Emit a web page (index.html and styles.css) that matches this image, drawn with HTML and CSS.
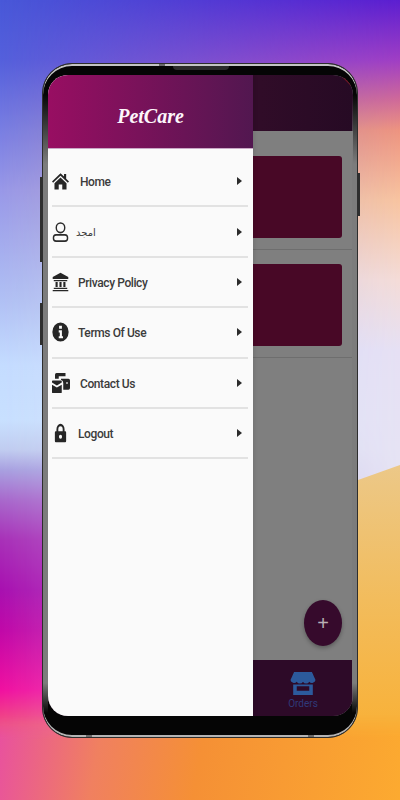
FILE: index.html
```html
<!DOCTYPE html>
<html lang="en">
<head>
<meta charset="utf-8">
<title>PetCare</title>
<link rel="stylesheet" href="styles.css">
</head>
<body>
<div class="wall wall-right"></div>
<div class="wall wall-orange"></div>
<div class="wall wall-bottom"></div>
<main class="phone">
  <span class="notch"></span>
  <span class="tick tick-top"></span>
  <span class="tick tick-bl"></span>
  <span class="tick tick-br"></span>
  <span class="btn btn-l1"></span>
  <span class="btn btn-l2"></span>
  <span class="btn btn-r"></span>
  <div class="screen">
    <div class="app">
      <header class="appbar"><span class="ribbon"></span></header>
      <section class="orders">
        <div class="order order-first"><div class="card"></div></div>
        <div class="order"><div class="card"></div></div>
      </section>
      <button class="fab">+</button>
      <nav class="bottom">
        <svg class="shop" viewBox="0 0 28 28"><path d="M4 1h20l4 9a4 4 0 0 1-7 2 4 4 0 0 1-7 0 4 4 0 0 1-7 0 4 4 0 0 1-7-2z"/><path d="M3 15h22v12H3zM7 17v5h14v-5z" fill-rule="evenodd"/></svg>
        <span>Orders</span>
      </nav>
    </div>
    <aside class="drawer">
      <div class="drawer-head"><span class="logo">PetCare</span></div>
      <ul class="menu">
        <li class="item"><svg class="ico" viewBox="0 -1 24 26" preserveAspectRatio="none"><path d="M12 2 0 12.500l1.600 1.800L12 5.200l10.400 9.100 1.600-1.800-4-3.500V3h-3v3.200z"/><path d="M12 7.400 3.500 14.800V23h6v-6.500h5V23h6v-8.200z"/></svg><span class="label l-far">Home</span><span class="caret"></span></li>
        <li class="item"><svg class="ico ico-line" viewBox="0 0 24 24" preserveAspectRatio="none"><ellipse cx="12" cy="7" rx="6" ry="5.800"/><rect x="2" y="15.500" width="20" height="7.500" rx="3.700"/></svg><span class="label l-ar">امجد</span><span class="caret"></span></li>
        <li class="item"><svg class="ico" viewBox="0 0 24 24" preserveAspectRatio="none"><path d="M12 1 1 6v2.500h22V6zM2.500 9.500h19V11h-19zM5 12h3v6H5zM10.500 12h3v6h-3zM16 12h3v6h-3zM2.500 19h19v1.500h-19zM1 21.500h22V23H1z"/></svg><span class="label">Privacy Policy</span><span class="caret"></span></li>
        <li class="item"><svg class="ico" viewBox="0 0 24 24" preserveAspectRatio="none"><path fill-rule="evenodd" d="M12 .5a11.500 11.500 0 1 0 0 23 11.500 11.500 0 0 0 0-23zM10 4.500h4V8h-4zM9.500 10H14v7h1.500v2.500h-6V17H11v-4.500H9.500z"/></svg><span class="label">Terms Of Use</span><span class="caret"></span></li>
        <li class="item"><svg class="ico ico-wide" viewBox="0 0 24 24" preserveAspectRatio="none"><path d="M6 0h12v4H9v3H4V2a2 2 0 0 1 2-2zM12 7h10a2 2 0 0 1 2 2v9a2 2 0 0 1-2 2h-7v-8a4 4 0 0 0-3-4zM19 11v2h2v-2z"/><path d="M1 9h11a1 1 0 0 1 1 1v1.500L6.500 15 0 11.500V10a1 1 0 0 1 1-1zM0 14l6.500 3.500L13 14v9a1 1 0 0 1-1 1H1a1 1 0 0 1-1-1z"/></svg><span class="label l-near">Contact Us</span><span class="caret"></span></li>
        <li class="item"><svg class="ico ico-lock" viewBox="0 0 24 24" preserveAspectRatio="none"><path fill-rule="evenodd" d="M12 1a6.500 6.500 0 0 0-6.500 6.500V10H4.500A1.500 1.500 0 0 0 3 11.500v10A1.500 1.500 0 0 0 4.500 23h15a1.500 1.500 0 0 0 1.500-1.500v-10a1.500 1.500 0 0 0-1.500-1.500h-1V7.500A6.500 6.500 0 0 0 12 1zM8.500 10V7.500a3.500 3.500 0 0 1 7 0V10zM12 14a2.500 2.500 0 1 1 0 5 2.500 2.500 0 0 1 0-5z"/></svg><span class="label">Logout</span><span class="caret"></span></li>
      </ul>
    </aside>
  </div>
</main>
</body>
</html>
```
FILE: styles.css
```css
* { box-sizing: border-box; }
html, body { margin: 0; height: 100%; }
body {
  width: 400px; height: 800px; overflow: hidden; position: relative;
  padding: 63px 42px 62px;
  background: linear-gradient(180deg,
    #4858d8 0, #5460dc 60px, #9898e8 190px, #b0c0f4 300px, #c4dcff 365px, #c8e0ff 420px,
    #c0ccf0 450px, #a8a0e0 470px, #a868cc 500px, #a830b8 540px, #a810b0 590px, #c008a8 630px,
    #f010a0 690px, #f05080 725px, #e850a0 760px, #e068b0 800px);
}
.wall { position: absolute; inset: 0; }
.wall-right {
  background: linear-gradient(180deg,
    #5c1ed0 0, #a03ec4 60px, #d06a98 100px, #ee9480 130px, #f8c4a0 200px,
    #f4dcd8 280px, #e6e0f4 350px, #e6e4f4 480px);
  -webkit-mask-image: linear-gradient(90deg, transparent 0, #000 100%);
  mask-image: linear-gradient(90deg, transparent 0, #000 100%);
}
.wall-orange {
  background: linear-gradient(180deg, #ecc888 465px, #f2bc5c 600px, #f9b035 740px);
  clip-path: polygon(100% 465px, 358px 480px, 200px 600px, 200px 100%, 100% 100%);
}
.wall-bottom {
  top: 715px;
  background: linear-gradient(100deg, #e850a0 0, #f08060 25%, #f59035 50%, #fcaa30 100%);
  -webkit-mask-image: linear-gradient(180deg, transparent 0, #000 25px);
  mask-image: linear-gradient(180deg, transparent 0, #000 25px);
}
.phone {
  position: relative; width: 316px; height: 675px;
  background: #050505;
  border-radius: 30px;
  border: 1px solid #2e2e2e;
  box-shadow: inset 0 2px 0 #c4c4c4, inset 0 -2px 0 #b4b4b4;
  padding: 11px 4px 21px 5px;
}
.phone::before, .phone::after {
  content: ""; position: absolute; top: 30px; bottom: 24px; width: 5px;
  background: linear-gradient(180deg, transparent 0, #7c7c7c 70px, #7c7c7c calc(100% - 30px), transparent 100%);
}
.phone::before { left: 0; }
.phone::after { right: 0; }
.notch { position: absolute; left: 130px; top: 2px; width: 56px; height: 4px; background: #2c2c2c; border-radius: 0 0 4px 4px; }
.tick { position: absolute; width: 6px; height: 2px; background: #6a6a6a; }
.tick-top { left: 116px; top: 0; }
.tick-bl { left: 43px; bottom: 0; }
.tick-br { right: 43px; bottom: 0; }
.btn { position: absolute; width: 2px; background: #2e2e2e; }
.btn-l1 { left: -3px; top: 113px; height: 85px; }
.btn-l2 { left: -3px; top: 239px; height: 42px; }
.btn-r { right: -3px; top: 109px; height: 43px; }
.screen { position: relative; height: 100%; border-radius: 20px; overflow: hidden; background: #7f7f7f; }
.app { height: 100%; display: flex; flex-direction: column; padding-left: 205px; position: relative; }
.appbar { height: 56px; margin-left: -205px; background: linear-gradient(90deg, #300c28 70%, #260a24); flex: none; position: relative; }
.ribbon { position: absolute; right: -18px; top: -4px; width: 36px; height: 14px; background: linear-gradient(180deg, #d8a0a0 0, #a01c28 50%, #7a1422); transform: rotate(45deg); }
.orders { flex: 1; }
.order { height: 108px; padding: 14px 11px 0 0; border-bottom: 1px solid #6e6e6e; }
.order-first { height: 119px; padding-top: 25px; }
.card { height: 82px; background: #480826; border-radius: 0 3px 3px 0; }
.fab {
  position: absolute; right: 11px; bottom: 70px;
  width: 38px; height: 46px; border: 0; border-radius: 50%;
  background: #360a2c; color: #b8b0b4; font: 400 20px/46px "Liberation Sans", sans-serif; padding: 0;
  box-shadow: 0 2px 4px rgba(0,0,0,.3);
}
.bottom { height: 56px; flex: none; background: #2d0a28; margin-left: -205px; padding-left: 205px; display: flex; flex-direction: column; align-items: center; padding-top: 11px; color: #2f3a78; font: 400 10px/12px Roboto, sans-serif; }
.shop { width: 26px; height: 25px; fill: #2c5a9c; margin-bottom: 2px; }
.drawer { position: absolute; left: 0; top: 0; bottom: 0; width: 205px; background: #fafafa; display: flex; flex-direction: column; box-shadow: 2px 0 3px rgba(0,0,0,.08); }
.drawer-head { height: 74px; flex: none; display: flex; align-items: center; justify-content: center; padding-top: 8px; background: linear-gradient(90deg, #980e62, #521750); border-bottom: 1px solid #c9a8c6; }
.logo { color: #fdf6fb; font: italic 700 20px/24px "Liberation Serif", serif; }
.menu { list-style: none; margin: 0; padding: 8px 0 0 4px; }
.item {
  display: flex; align-items: center; height: 50.400px; width: 196px;
  border-bottom: 2px solid #e2e2e2; color: #3c3c3c;
  font: 500 12px/16px Roboto, "DejaVu Sans", sans-serif; letter-spacing: -.4px;
}
.ico { width: 17px; height: 20px; flex: none; fill: #262626; }
.ico-line { fill: none; stroke: #2b2b2b; stroke-width: 2; }
.ico-wide { width: 18px; }
.ico-lock { width: 15px; margin-left: 1px; margin-right: 1px; }
.label { margin: 2px 0 0 9px; flex: 1; }
.l-far { margin-left: 11px; }
.l-near { margin-left: 10px; }
.l-ar { font-family: "DejaVu Sans", sans-serif; font-size: 10px; font-weight: 400; margin-left: 7px; letter-spacing: 0; }
.caret { width: 0; height: 0; margin-right: 6px; border-left: 5px solid #2b2b2b; border-top: 4px solid transparent; border-bottom: 4px solid transparent; }
```
